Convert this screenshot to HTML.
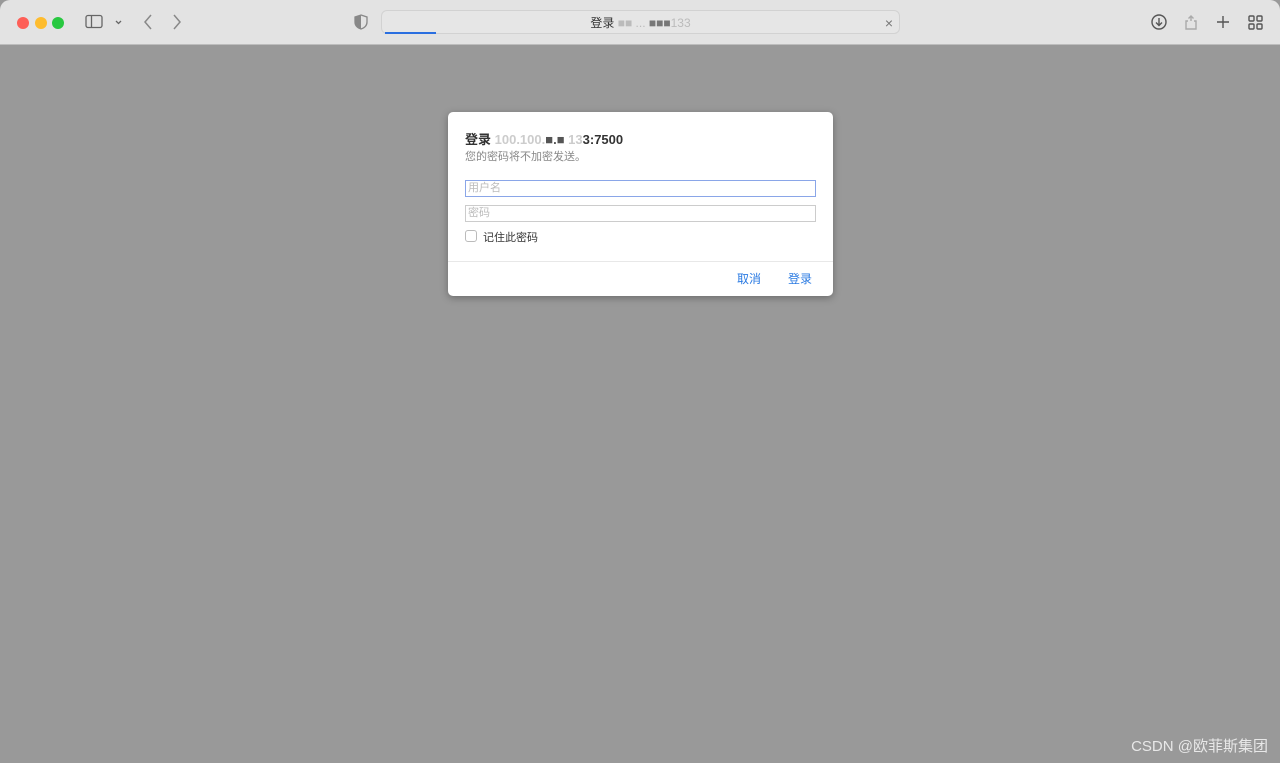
<!DOCTYPE html>
<html><head><meta charset="utf-8"><style>
*{margin:0;padding:0;box-sizing:border-box}
body{width:1280px;height:763px;overflow:hidden;background:#999;font-family:"Liberation Sans","Noto Sans CJK SC",sans-serif;position:relative}
.bar{position:absolute;left:0;top:0;width:1280px;height:45px;background:#e3e3e3;border-bottom:1px solid #bdbdbd;border-radius:10px 10px 0 0}
.dot{position:absolute;top:17px;width:12px;height:12px;border-radius:50%}
.url{position:absolute;left:381px;top:10px;width:519px;height:24px;border:1px solid #d2d2d2;border-radius:6px;background:#e6e6e6;font-size:12px;color:#333;text-align:center;line-height:24px}
.prog{position:absolute;left:385px;top:32px;width:51px;height:2px;background:#2a6fe0}
.dlg{position:absolute;left:448px;top:112px;width:385px;height:184px;background:#fff;border-radius:5px;box-shadow:0 2px 8px rgba(0,0,0,.3)}
.t{position:absolute;left:17px;top:17px;font-size:13px;font-weight:bold;color:#333}
.s{position:absolute;left:17px;top:36px;font-size:11px;color:#888}
.in{position:absolute;left:17px;width:351px;height:17px;border:1px solid #ccc;font-size:11px;color:#bbb;padding-left:2px;line-height:15px}
.cb{position:absolute;left:17px;top:118px;width:12px;height:12px;border:1px solid #bbb;border-radius:3px}
.btn{position:absolute;top:158px;font-size:12px;color:#2a7ae2}
</style></head><body>
<div class="bar">
<div class="dot" style="left:17px;background:#fe5f57"></div>
<div class="dot" style="left:35px;background:#febc2e"></div>
<div class="dot" style="left:52px;background:#28c840"></div>
<svg style="position:absolute;left:85px;top:14px" width="40" height="16" fill="none" stroke="#666" stroke-width="1.3"><rect x="1" y="1.5" width="16" height="12" rx="2"/><line x1="6.5" y1="1.5" x2="6.5" y2="13.5"/><path d="M31 7l2.5 2.5 2.5-2.5"/></svg>
<svg style="position:absolute;left:140px;top:13px" width="45" height="18" fill="none" stroke="#888" stroke-width="1.5"><path d="M11 2l-6 7 6 7"/><path d="M34 2l6 7-6 7"/></svg>
<svg style="position:absolute;left:354px;top:14px" width="14" height="16"><path d="M7 1l6 2v5c0 4-3 6-6 7-3-1-6-3-6-7V3z" fill="none" stroke="#888" stroke-width="1.3"/><path d="M7 1v14c-3-1-6-3-6-7V3z" fill="#888"/></svg>
<div class="url"><span style="color:#333">登录</span> <span style="color:#bbb">■■ ... </span><span style="color:#777">■■■</span><span style="color:#bbb">133</span><span style="position:absolute;right:6px;color:#777;font-size:14px">×</span></div>
<div class="prog"></div>
<svg style="position:absolute;left:1150px;top:13px" width="120" height="18" fill="none" stroke-width="1.4"><circle cx="9" cy="9" r="7" stroke="#555"/><path d="M9 5v7M6 9.5l3 3 3-3" stroke="#555"/><path d="M41 8v-5M38.5 5.5l2.5-2.5 2.5 2.5M38 8h-2v8h10v-8h-2" stroke="#aaa"/><path d="M73 3v12M67 9h12" stroke="#555"/><rect x="99" y="3" width="5" height="5" rx="1" stroke="#555"/><rect x="107" y="3" width="5" height="5" rx="1" stroke="#555"/><rect x="99" y="11" width="5" height="5" rx="1" stroke="#555"/><rect x="107" y="11" width="5" height="5" rx="1" stroke="#555"/></svg>
</div>
<div class="dlg">
<div class="t">登录 <span style="color:#ccc">100.100.</span><span style="color:#555">■.■</span><span style="color:#ccc"> 13</span>3:7500</div>
<div class="s">您的密码将不加密发送。</div>
<div class="in" style="top:68px;border-color:#8aa6e8">用户名</div>
<div class="in" style="top:93px">密码</div>
<div class="cb"></div>
<div style="position:absolute;left:35px;top:117px;font-size:11px;color:#333">记住此密码</div>
<div style="position:absolute;left:0;top:149px;width:385px;height:1px;background:#e8e8e8"></div>
<div class="btn" style="left:289px">取消</div>
<div class="btn" style="left:340px">登录</div>
</div>
<div style="position:absolute;right:12px;top:735px;font-size:15px;color:#e8e8e8">CSDN @欧菲斯集团</div>
</body></html>
